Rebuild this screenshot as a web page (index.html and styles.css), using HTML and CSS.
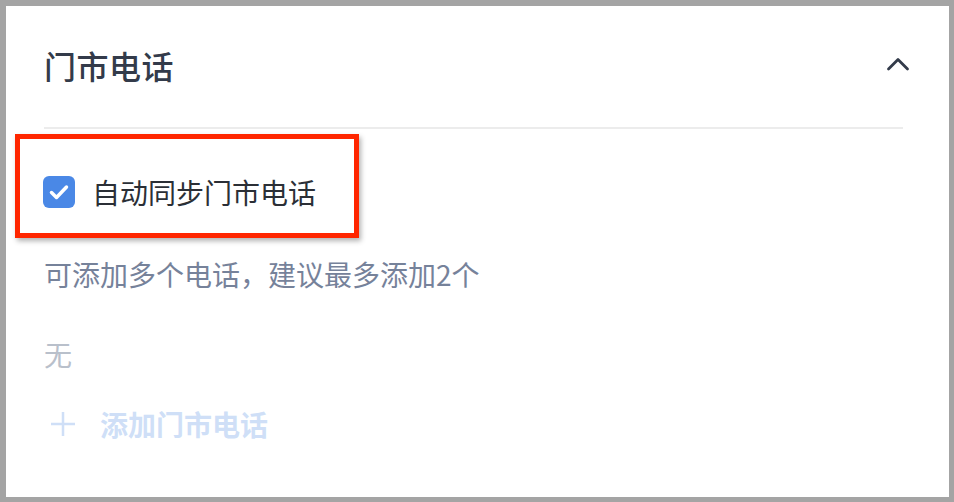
FILE: index.html
```html
<!DOCTYPE html>
<html lang="zh-CN">

<head>
    <meta charset="UTF-8">
    <meta name="viewport" content="width=device-width, initial-scale=1.0">
    <title>门市电话</title>
    <link rel="stylesheet" href="styles.css">
</head>

<body>
    <div class="panel">
        <header class="panel_head">
            <h2>门市电话</h2>
            <svg class="panel_toggle" width="24" height="16" viewBox="0 0 24 16">
                <path d="M2.5 13 L12 3.5 L21.5 13" fill="none" stroke="#333b4a" stroke-width="2.8" stroke-linecap="round" stroke-linejoin="round" />
            </svg>
        </header>
        <div class="panel_body">
            <label class="sync_row">
                <span class="check_box">
                    <svg width="32" height="32" viewBox="0 0 32 32">
                        <path d="M8.5 16.5 L13.5 21.5 L23.5 11" fill="none" stroke="#fff" stroke-width="3.5" stroke-linecap="round" stroke-linejoin="round" />
                    </svg>
                </span>
                <span>自动同步门市电话</span>
                <span class="mark_box"></span>
            </label>
            <p class="tips">可添加多个电话，建议最多添加2个</p>
            <p class="empty">无</p>
            <a class="add_btn" href="#">
                <svg width="26" height="26" viewBox="0 0 26 26">
                    <path d="M13 1 V25 M1 13 H25" stroke="#cfdff7" stroke-width="2.5" />
                </svg>
                <span>添加门市电话</span>
            </a>
        </div>
    </div>
</body>

</html>
```

FILE: styles.css
```css
* {
    margin: 0;
    padding: 0;
    box-sizing: border-box;
}

body {
    height: 502px;
    padding: 6px 5px 5px 6px;
    background-color: #a4a4a4;
    font-family: "Noto Sans CJK SC", "Noto Sans", sans-serif;
    overflow: hidden;
}

.panel {
    height: 100%;
    background-color: #fff;
    padding: 0 46px 0 38px;
}

/* 标题栏 */

.panel_head {
    height: 123px;
    padding-bottom: 4px;
    display: flex;
    align-items: center;
    justify-content: space-between;
    border-bottom: 2px solid #ececec;
}

.panel_head h2 {
    font-size: 32px;
    font-weight: 500;
    color: #333b4a;
    letter-spacing: 0.5px;
}

.panel_toggle {
    margin-right: -7px;
    margin-top: -1px;
}

/* 内容 */

.sync_row {
    position: relative;
    display: flex;
    align-items: center;
    height: 40px;
    margin-top: 43px;
    font-size: 28px;
    color: #2b2f36;
}

.check_box {
    width: 32px;
    height: 32px;
    margin-left: -1px;
    margin-right: 17px;
    border-radius: 6px;
    background-color: #4a88e6;
}

.check_box svg {
    display: block;
}

.mark_box {
    position: absolute;
    left: -29px;
    top: -38px;
    width: 344px;
    height: 104px;
    border: 5px solid #ff2600;
    box-shadow: 2px 3px 5px rgba(0, 0, 0, 0.3);
}

.tips {
    margin-top: 42px;
    line-height: 40px;
    font-size: 28px;
    color: #76829a;
}

.empty {
    margin-top: 40px;
    line-height: 40px;
    font-size: 28px;
    color: #b9c0cb;
}

.add_btn {
    display: flex;
    align-items: center;
    height: 40px;
    margin-top: 30px;
    font-size: 28px;
    font-weight: 700;
    color: #cfdff7;
    text-decoration: none;
}

.add_btn svg {
    margin-left: 6px;
    margin-right: 24px;
}
```
